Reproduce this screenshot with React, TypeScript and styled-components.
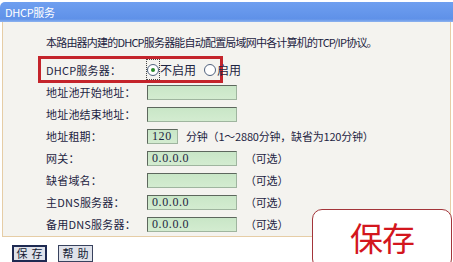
import React, { FC } from 'react'
import styled, { createGlobalStyle } from 'styled-components'

const GlobalStyle = createGlobalStyle`
  html, body {
    margin: 0;
    padding: 0;
    background: #ffffff;
    overflow: hidden;
  }
  body {
    font-family: "Noto Sans CJK SC", "DejaVu Sans", sans-serif;
    font-size: 11px;
    color: #1d2442;
  }
`

const StyledPage = styled.div`
  position: relative;
  width: 453px;
  height: 262px;
  background: #ffffff;
  overflow: hidden;
`
const StyledTitleBar = styled.div`
  display: flex;
  align-items: center;
  height: 20px;
  margin-top: 2px;
  padding-left: 5px;
  border-radius: 5px 0 0 0;
  background: linear-gradient(#6f9ff0, #5f91e8 85%, #8db3ef);
  color: #ffffff;
  font-size: 11px;
  letter-spacing: -0.3px;
`
const StyledPanel = styled.div`
  display: flex;
  flex-direction: column;
  margin: 0 2px 0 2px;
  padding: 12px 0 3px 43px;
  height: 199px;
  background: #f4f3ef;
  border-left: 1px solid #e6cda6;
  border-right: 1px solid #e6cda6;
  border-bottom: 1px solid #e6cda6;
`
const StyledIntro = styled.div`
  height: 16px;
  line-height: 16px;
  letter-spacing: -0.8px;
  white-space: nowrap;
`
const StyledHighlight = styled.div`
  display: flex;
  align-items: center;
  width: 174px;
  height: 21px;
  margin: 6px 0 0 -8px;
  padding-left: 5px;
  border: 3px solid #c4242b;
`
const StyledList = styled.div`
  display: flex;
  flex-direction: column;
  margin-top: -2px;
`
const StyledRow = styled.div`
  display: flex;
  align-items: center;
  height: 22px;
`
const StyledLabel = styled.span`
  width: 101px;
  flex-shrink: 0;
  letter-spacing: 0.2px;
  white-space: nowrap;
`
const StyledInput = styled.div<{ $w: number }>`
  width: ${(p) => p.$w}px;
  height: 13px;
  padding-left: 4px;
  box-sizing: content-box;
  display: flex;
  align-items: center;
  background: linear-gradient(#c9e6c7, #d3ecd0);
  border-top: 1px solid #5d675d;
  border-left: 1px solid #5d675d;
  border-right: 1px solid #9fb59f;
  border-bottom: 1px solid #9fb59f;
  font-family: "Liberation Serif", serif;
  font-size: 12px;
  letter-spacing: 0.6px;
  color: #1d2442;
`
const StyledNote = styled.span`
  margin-left: 8px;
  white-space: nowrap;
  letter-spacing: -0.2px;
`
const StyledRadioFocus = styled.span`
  display: flex;
  align-items: center;
  justify-content: center;
  width: 17px;
  height: 19px;
  margin-left: -1px;
  border: 1px dotted #444;
`
const StyledRadio = styled.span<{ $checked?: boolean }>`
  position: relative;
  display: inline-block;
  width: 10px;
  height: 10px;
  border-radius: 50%;
  border: 1px solid #50627e;
  background: #ffffff;
  &::after {
    content: '';
    display: ${(p) => (p.$checked ? 'block' : 'none')};
    position: absolute;
    left: 3px;
    top: 3px;
    width: 4px;
    height: 4px;
    border-radius: 50%;
    background: #2a8a2a;
  }
`
const StyledOption = styled.span<{ $gap: number }>`
  display: flex;
  align-items: center;
  margin-left: ${(p) => p.$gap}px;
  gap: 1px;
  font-size: 12px;
  white-space: nowrap;
`
const StyledFooter = styled.div`
  display: flex;
  gap: 11px;
  padding: 8px 0 0 12px;
`
const StyledButton = styled.button<{ $primary?: boolean }>`
  width: 35px;
  height: 17px;
  padding: 0;
  display: flex;
  align-items: center;
  justify-content: center;
  box-sizing: border-box;
  background: #dfe2ea;
  border: ${(p) => (p.$primary ? '2px solid #1e2a52' : '1px solid #38425e')};
  font-family: "Noto Sans CJK SC", sans-serif;
  font-size: 11px;
  line-height: 13px;
  letter-spacing: 4px;
  text-indent: 4px;
  white-space: nowrap;
  color: #141a33;
`
const StyledCallout = styled.div`
  position: absolute;
  left: 312px;
  top: 209px;
  width: 140px;
  height: 60px;
  display: flex;
  justify-content: center;
  padding-top: 7px;
  box-sizing: border-box;
  background: #ffffff;
  border: 1px solid #a3353a;
  border-radius: 10px;
  color: #d3161d;
  font-size: 33px;
  line-height: 40px;
  letter-spacing: -1px;
`

const rows = [
  { label: '地址池开始地址：', value: '', width: 84 },
  { label: '地址池结束地址：', value: '', width: 84 },
  { label: '地址租期：', value: '120', width: 25, note: '分钟（1～2880分钟，缺省为120分钟）' },
  { label: '网关：', value: '0.0.0.0', width: 84, note: '（可选）' },
  { label: '缺省域名：', value: '', width: 84, note: '（可选）' },
  { label: '主DNS服务器：', value: '0.0.0.0', width: 84, note: '（可选）' },
  { label: '备用DNS服务器：', value: '0.0.0.0', width: 84, note: '（可选）' },
]

const App: FC = () => {
  return (
    <StyledPage>
      <GlobalStyle />
      <StyledTitleBar>DHCP服务</StyledTitleBar>

      <StyledPanel>
        <StyledIntro>本路由器内建的DHCP服务器能自动配置局域网中各计算机的TCP/IP协议。</StyledIntro>

        <StyledHighlight>
          <StyledLabel>DHCP服务器：</StyledLabel>
          <StyledRadioFocus>
            <StyledRadio $checked />
          </StyledRadioFocus>
          <StyledOption $gap={0}>不启用</StyledOption>
          <StyledOption $gap={8}>
            <StyledRadio />
            启用
          </StyledOption>
        </StyledHighlight>

        <StyledList>
          {rows.map((r) => (
            <StyledRow key={r.label}>
              <StyledLabel>{r.label}</StyledLabel>
              <StyledInput $w={r.width}>{r.value}</StyledInput>
              {r.note && <StyledNote>{r.note}</StyledNote>}
            </StyledRow>
          ))}
        </StyledList>
      </StyledPanel>

      <StyledFooter>
        <StyledButton $primary>保存</StyledButton>
        <StyledButton>帮助</StyledButton>
      </StyledFooter>

      <StyledCallout>保存</StyledCallout>
    </StyledPage>
  )
}

export default App
